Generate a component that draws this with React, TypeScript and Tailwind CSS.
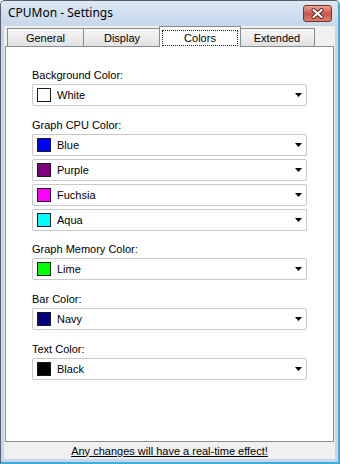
import React from 'react';

const tabs = [
  { label: 'General', w: 'w-[77px]', active: false },
  { label: 'Display', w: 'w-[78px] -ml-px', active: false },
  { label: 'Colors', w: 'w-[82px] -mx-[2px]', active: true },
  { label: 'Extended', w: 'w-[76px]', active: false },
];

type Opt = { name: string; color: string };

const sections: { label: string; items: Opt[]; tight?: boolean }[] = [
  { label: 'Background Color:', items: [{ name: 'White', color: '#ffffff' }] },
  {
    label: 'Graph CPU Color:',
    items: [
      { name: 'Blue', color: '#0000ff' },
      { name: 'Purple', color: '#800080' },
      { name: 'Fuchsia', color: '#ff00ff' },
      { name: 'Aqua', color: '#00ffff' },
    ],
  },
  { label: 'Graph Memory Color:', items: [{ name: 'Lime', color: '#00ff00' }], tight: true },
  { label: 'Bar Color:', items: [{ name: 'Navy', color: '#000080' }] },
  { label: 'Text Color:', items: [{ name: 'Black', color: '#000000' }] },
];

function ColorSelect({ opt }: { opt: Opt }) {
  return (
    <div className="h-[22px] w-[275px] border border-[#c9c9c9] rounded-[2px] bg-white flex items-center pl-[4px] pr-[4px]">
      <span
        className="w-[14px] h-[14px] border border-[#1a1a1a] shrink-0"
        style={{ backgroundColor: opt.color }}
      />
      <span className="ml-[6px] flex-1 text-[11px] leading-[14px] text-black">{opt.name}</span>
      <svg width="7" height="4" viewBox="0 0 7 4" className="shrink-0">
        <polygon points="0,0 7,0 3.5,4" fill="#000" />
      </svg>
    </div>
  );
}

export default function App() {
  return (
    <div className="w-[340px] h-[464px] flex flex-col bg-[#c6d7eb] border-t border-l border-[#58616d] border-r-2 border-b-2 border-r-[#3faedc] border-b-[#3faedc] rounded-t-[5px] overflow-hidden font-['Liberation_Sans',Arial,sans-serif] text-black">
      {/* title bar */}
      <div className="h-[25px] flex items-start bg-gradient-to-b from-[#dde8f5] to-[#c6d7eb]">
        <span className="ml-[7px] mt-[4px] flex-1 text-[12px] leading-[16px] font-['Noto_Sans',sans-serif]">
          CPUMon - Settings
        </span>
        <div className="mt-[4px] mr-[6px] w-[29px] h-[17px] rounded-[3px] border border-[#7a3029] bg-gradient-to-b from-[#e6a897] via-[#c9544a] to-[#d9806f] flex items-center justify-center">
          <svg width="13" height="11" viewBox="0 0 13 11">
            <path d="M2.5 2 L10.5 9 M10.5 2 L2.5 9" stroke="#5a2620" strokeWidth="4" strokeLinecap="round" />
            <path d="M2.5 2 L10.5 9 M10.5 2 L2.5 9" stroke="#ffffff" strokeWidth="2.2" strokeLinecap="round" />
          </svg>
        </div>
      </div>

      {/* frame + client */}
      <div className="flex-1 flex px-[3px] pb-[3px]">
        <div className="flex-1 flex flex-col bg-[#f0f0f0] px-[1px]">
          <div className="h-[20px] flex items-end pl-[2px]">
            {tabs.map((t) =>
              t.active ? (
                <div
                  key={t.label}
                  className={`${t.w} relative z-10 h-[21px] -mb-px bg-white border-t border-l border-r border-[#898c95] flex px-[2px] pt-[3px] pb-[1px]`}
                >
                  <div className="flex-1 border border-dotted border-[#222] flex items-center justify-center text-[11px] leading-[14px] pb-[1px]">
                    {t.label}
                  </div>
                </div>
              ) : (
                <div
                  key={t.label}
                  className={`${t.w} h-[18px] border-t border-l border-r border-[#898c95] bg-gradient-to-b from-[#f8f8f8] to-[#e1e1e1] flex items-center justify-center text-[11px] leading-[14px]`}
                >
                  {t.label}
                </div>
              )
            )}
          </div>

          <div className="h-[396px] border border-[#898c95] bg-white pt-[21px] pl-[26px] flex flex-col gap-[12px]">
            {sections.map((s) => (
              <div key={s.label} className={s.tight ? 'flex flex-col -mt-px' : 'flex flex-col'}>
                <div className="text-[11px] leading-[14px] mb-[2px]">{s.label}</div>
                <div className="flex flex-col gap-[3px]">
                  {s.items.map((o) => (
                    <ColorSelect key={o.name} opt={o} />
                  ))}
                </div>
              </div>
            ))}
          </div>

          <div className="flex-1 flex items-center justify-center text-[11px] leading-[14px] underline">
            Any changes will have a real-time effect!
          </div>
        </div>
      </div>
    </div>
  );
}
